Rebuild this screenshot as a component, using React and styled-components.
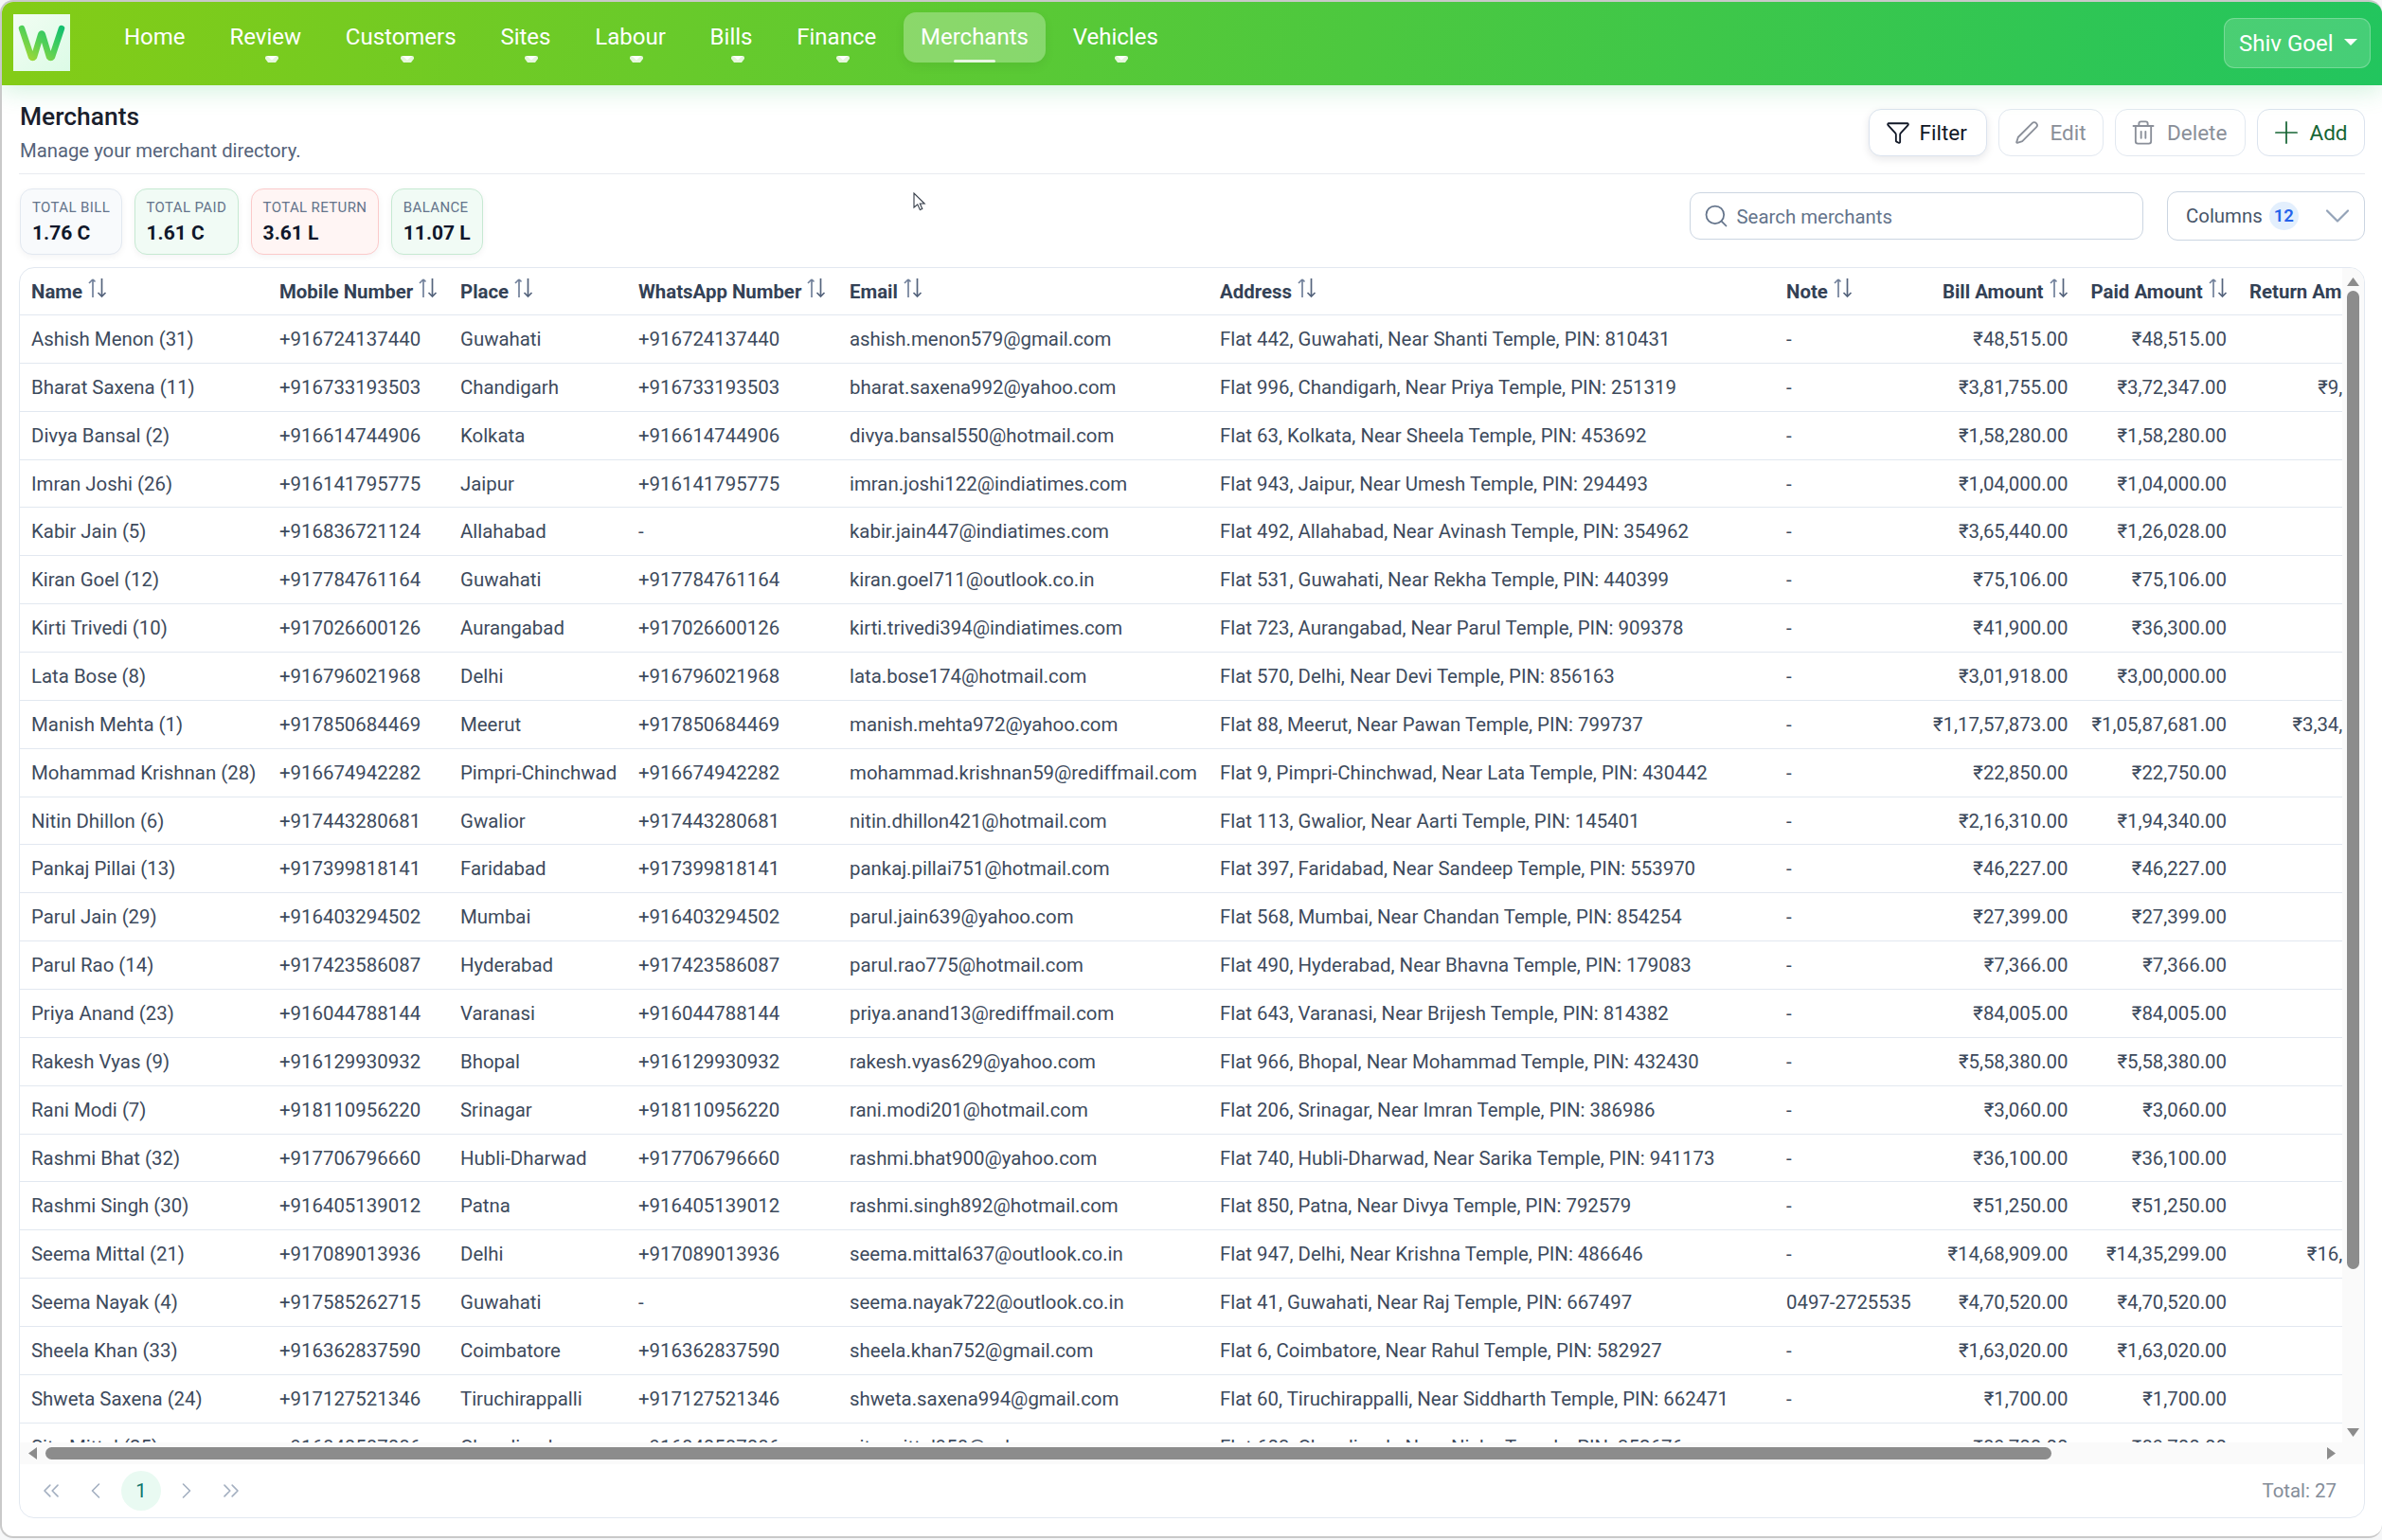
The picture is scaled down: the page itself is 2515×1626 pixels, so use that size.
import React from "react";
import styled, { createGlobalStyle } from "styled-components";
import { Search, Filter, Pen, Trash2, Plus, ChevronDown, ChevronsLeft, ChevronLeft, ChevronRight, ChevronsRight } from "lucide-react";

const GlobalStyle = createGlobalStyle`
  html, body { margin: 0; padding: 0; background: #f6f7f8; }
  body { font-family: Roboto, "Liberation Sans", sans-serif; color: #334155; }
  * { box-sizing: border-box; }
`;

const Page = styled.div`
  position: relative;
  width: 2515px;
  height: 1626px;
  padding-bottom: 2px;
`;
const Window = styled.div`
  height: 1624px;
  background: #fff;
  border: solid #c9c9c9;
  border-width: 2px 0 2px 2px;
  border-radius: 14px;
  overflow: hidden;
  display: flex;
  flex-direction: column;
`;
const Navbar = styled.header`
  flex: none;
  height: 88px;
  padding: 11px 12px 0 12px;
  display: flex;
  align-items: flex-start;
  background: linear-gradient(100deg, #84cc16 0%, #22c55e 100%);
  box-shadow: 0 6px 24px rgba(34, 197, 94, 0.2);
  position: relative;
  z-index: 2;
`;
const LogoBox = styled.svg`
  width: 60px;
  height: 60px;
  margin: 2px 39px 0 0;
  flex: none;
`;
const NavList = styled.nav`
  display: flex;
  gap: 10.8px;
  flex: 1;
`;
const NavItem = styled.a`
  position: relative;
  height: 53px;
  padding: 0 18px;
  display: flex;
  align-items: center;
  padding-bottom: 2px;
  font-size: 24px;
  color: #fff;
  border-radius: 13px;
  background: ${(p) => (p.$active ? "rgba(255,255,255,0.28)" : "transparent")};
  box-shadow: ${(p) => (p.$active ? "0 4px 12px rgba(0,0,0,0.06)" : "none")};
`;
const Caret = styled.svg`
  position: absolute;
  bottom: 0;
  left: calc(50% + 6.5px);
  transform: translateX(-50%);
  width: 14px;
  height: 7px;
`;
const ActiveBar = styled.span`
  position: absolute;
  left: 50%;
  bottom: 0;
  width: 44px;
  height: 3px;
  margin-left: -22px;
  background: rgba(255, 255, 255, 0.8);
  border-radius: 2px;
`;
const UserButton = styled.button`
  flex: none;
  margin-top: 6px;
  width: 155px;
  height: 53px;
  padding: 0 13px 0 15px;
  display: flex;
  align-items: center;
  justify-content: space-between;
  font: 400 24px Roboto, sans-serif;
  color: #fff;
  background: rgba(255, 255, 255, 0.16);
  border: 1.5px solid rgba(255, 255, 255, 0.25);
  border-radius: 11px;
`;
const UserCaret = styled.span`
  width: 0;
  height: 0;
  border-left: 7px solid transparent;
  border-right: 7px solid transparent;
  border-top: 7px solid #fff;
  margin-top: -2px;
`;
const Main = styled.main`
  flex: 1;
  min-height: 0;
  padding: 0 18px 0 18px;
  display: flex;
  flex-direction: column;
`;
const Header = styled.div`
  flex: none;
  height: 94px;
  padding: 17px 0 0 1px;
  display: flex;
  justify-content: space-between;
  align-items: flex-start;
  border-bottom: 1.5px solid #e8ebf0;
`;
const Title = styled.h1`
  margin: 0;
  font-size: 26.4px;
  line-height: 32px;
  font-weight: 500;
  color: #1a202c;
`;
const Subtitle = styled.p`
  margin: 5px 0 0;
  font-size: 20.3px;
  line-height: 30px;
  color: #55637a;
`;
const Actions = styled.div`
  display: flex;
  gap: 12px;
  margin-top: 8px;
`;
const ActionButton = styled.button`
  width: ${(p) => p.$w}px;
  height: 50px;
  padding: 0 0 0 ${(p) => p.$pl}px;
  display: flex;
  align-items: center;
  gap: ${(p) => p.$gap}px;
  font: 400 22.5px Roboto, sans-serif;
  color: ${(p) => p.$color};
  background: #fff;
  border: 1.5px solid ${(p) => p.$border || "#e2e8f0"};
  border-radius: 13px;
  box-shadow: ${(p) => (p.$raised ? "0 3px 9px rgba(15,23,42,0.1)" : "none")};
`;
const Toolbar = styled.div`
  flex: none;
  height: 98px;
  padding: 15px 0 0 1px;
  display: flex;
  justify-content: space-between;
  align-items: flex-start;
`;
const Stats = styled.div`
  display: flex;
  gap: 12.4px;
`;
const StatCard = styled.div`
  height: 70px;
  padding: 10px 12px 0;
  background: ${(p) => p.$bg};
  border: 1.5px solid ${(p) => p.$border};
  border-radius: 13px;
  box-shadow: 0 2px 7px rgba(15, 23, 42, 0.05);
`;
const StatLabel = styled.div`
  font-size: 15px;
  line-height: 19px;
  letter-spacing: 0.37px;
  color: #64748b;
  text-transform: uppercase;
  white-space: nowrap;
`;
const StatValue = styled.div`
  margin-top: 3px;
  font-size: 21px;
  line-height: 28px;
  font-weight: 700;
  color: #0f172a;
  white-space: nowrap;
`;
const Controls = styled.div`
  display: flex;
  align-items: center;
  gap: 25px;
  margin-top: 3px;
`;
const SearchBox = styled.label`
  width: 479px;
  height: 50px;
  padding: 0 0 0 13px;
  display: flex;
  align-items: center;
  gap: 7.5px;
  font-size: 20.4px;
  color: #64748b;
  border: 1.5px solid #cbd5e1;
  border-radius: 11px;
`;
const SearchText = styled.span`
  padding-top: 2px;
`;
const ColumnsButton = styled.button`
  width: 209px;
  height: 52px;
  padding: 0 6px 0 19px;
  display: flex;
  align-items: center;
  font: 400 20.4px Roboto, sans-serif;
  color: #475569;
  background: #fff;
  border: 1.5px solid #cbd5e1;
  border-radius: 11px;
`;
const CountBadge = styled.span`
  width: 31px;
  height: 30px;
  margin-left: 7px;
  margin-right: auto;
  display: flex;
  align-items: center;
  justify-content: center;
  font-size: 18.5px;
  font-weight: 600;
  color: #2563eb;
  background: #e3effd;
  border-radius: 15px;
`;
const TableFrame = styled.section`
  flex: none;
  height: 1321px;
  border: 1.5px solid #e2e8f0;
  border-radius: 16px;
  overflow: hidden;
  display: flex;
  flex-direction: column;
  background: #fff;
`;
const ScrollArea = styled.div`
  flex: 1;
  min-height: 0;
  display: grid;
  grid-template-columns: 1fr 23px;
  grid-template-rows: 1fr 23px;
`;
const Viewport = styled.div`
  overflow: hidden;
  min-width: 0;
  min-height: 0;
`;
const Table = styled.table`
  width: 2530px;
  table-layout: fixed;
  border-collapse: separate;
  border-spacing: 0;
  font-size: 20.4px;
`;
const HeadCell = styled.th`
  height: 50px;
  padding: 0 12px;
  font-size: 20.4px;
  font-weight: 700;
  color: #334155;
  text-align: ${(p) => (p.$right ? "right" : "left")};
  border-bottom: 1.5px solid #e2e8f0;
  white-space: nowrap;
`;
const HeadInner = styled.span`
  display: inline-flex;
  align-items: center;
  gap: 5px;
`;
const SortGlyph = styled.svg`
  width: 21px;
  height: 22px;
  margin-bottom: 7px;
  flex: none;
`;
const BodyCell = styled.td`
  height: 50.86px;
  padding: 0 ${(p) => p.$pr || 12}px 0 12px;
  color: #3d4a5c;
  font-weight: 400;
  text-align: ${(p) => (p.$right ? "right" : "left")};
  border-bottom: 1.5px solid #e2e8f0;
  white-space: nowrap;
  overflow: hidden;
`;
const VBar = styled.div`
  background: #fafafa;
  display: flex;
  flex-direction: column;
  align-items: center;
  padding: 10px 0 6px;
`;
const VThumb = styled.div`
  width: 13px;
  height: 1033px;
  margin-top: 5px;
  background: #8c8c8c;
  border-radius: 7px;
`;
const VArrowEnd = styled.svg`
  width: 13px;
  height: 9px;
  margin-top: auto;
  fill: #8c8c8c;
`;
const HBar = styled.div`
  grid-column: 1 / 3;
  background: #fafafa;
  display: flex;
  align-items: center;
  padding: 0 30px 0 9px;
`;
const HThumb = styled.div`
  width: 2118px;
  height: 13px;
  margin-left: 8.5px;
  background: #8c8c8c;
  border-radius: 7px;
`;
const Arrow = styled.svg`
  width: ${(p) => p.$w}px;
  height: ${(p) => p.$h}px;
  flex: none;
  fill: #8c8c8c;
`;
const HArrowEnd = styled(Arrow)`
  margin-left: auto;
`;
const Pager = styled.div`
  flex: none;
  height: 56px;
  padding: 0 29px 0 11.5px;
  display: flex;
  align-items: center;
  color: #a3afc0;
`;
const PageSlot = styled.span`
  width: 42px;
  height: 42px;
  margin-right: 5.7px;
  display: flex;
  align-items: center;
  justify-content: center;
  border-radius: 50%;
  font-size: 20.4px;
  color: ${(p) => (p.$current ? "#0f766e" : "inherit")};
  background: ${(p) => (p.$current ? "#e9faf2" : "transparent")};
`;
const Total = styled.div`
  margin-left: auto;
  font-size: 20.4px;
  color: #858d99;
`;
const Cursor = styled.svg`
  position: absolute;
  left: 964px;
  top: 203px;
  width: 14px;
  height: 20px;
`;

const navItems = [
  ["Home", false],
  ["Review", true],
  ["Customers", true],
  ["Sites", true],
  ["Labour", true],
  ["Bills", true],
  ["Finance", true],
  ["Merchants", false, true],
  ["Vehicles", true],
];

const stats = [
  ["Total Bill", "1.76 C", "#f8fafc", "#e2e8f0"],
  ["Total Paid", "1.61 C", "#f1fbf5", "#c6e9d2"],
  ["Total Return", "3.61 L", "#fff5f4", "#fbcaca"],
  ["Balance", "11.07 L", "#f1fbf5", "#c6e9d2"],
];

const columns = [
  ["Name", 262],
  ["Mobile Number", 191],
  ["Place", 188],
  ["WhatsApp Number", 223],
  ["Email", 391],
  ["Address", 598],
  ["Note", 153.5],
  ["Bill Amount", 168, true],
  ["Paid Amount", 167.5, true],
  ["Return Amount", 188, true],
];

const rows = [
  ["Ashish Menon (31)", "+916724137440", "Guwahati", 1, "ashish.menon579@gmail.com", "Flat 442, Guwahati, Near Shanti Temple, PIN: 810431", "-", "₹48,515.00", "₹48,515.00", ""],
  ["Bharat Saxena (11)", "+916733193503", "Chandigarh", 1, "bharat.saxena992@yahoo.com", "Flat 996, Chandigarh, Near Priya Temple, PIN: 251319", "-", "₹3,81,755.00", "₹3,72,347.00", "₹9,408.00"],
  ["Divya Bansal (2)", "+916614744906", "Kolkata", 1, "divya.bansal550@hotmail.com", "Flat 63, Kolkata, Near Sheela Temple, PIN: 453692", "-", "₹1,58,280.00", "₹1,58,280.00", ""],
  ["Imran Joshi (26)", "+916141795775", "Jaipur", 1, "imran.joshi122@indiatimes.com", "Flat 943, Jaipur, Near Umesh Temple, PIN: 294493", "-", "₹1,04,000.00", "₹1,04,000.00", ""],
  ["Kabir Jain (5)", "+916836721124", "Allahabad", 0, "kabir.jain447@indiatimes.com", "Flat 492, Allahabad, Near Avinash Temple, PIN: 354962", "-", "₹3,65,440.00", "₹1,26,028.00", ""],
  ["Kiran Goel (12)", "+917784761164", "Guwahati", 1, "kiran.goel711@outlook.co.in", "Flat 531, Guwahati, Near Rekha Temple, PIN: 440399", "-", "₹75,106.00", "₹75,106.00", ""],
  ["Kirti Trivedi (10)", "+917026600126", "Aurangabad", 1, "kirti.trivedi394@indiatimes.com", "Flat 723, Aurangabad, Near Parul Temple, PIN: 909378", "-", "₹41,900.00", "₹36,300.00", ""],
  ["Lata Bose (8)", "+916796021968", "Delhi", 1, "lata.bose174@hotmail.com", "Flat 570, Delhi, Near Devi Temple, PIN: 856163", "-", "₹3,01,918.00", "₹3,00,000.00", ""],
  ["Manish Mehta (1)", "+917850684469", "Meerut", 1, "manish.mehta972@yahoo.com", "Flat 88, Meerut, Near Pawan Temple, PIN: 799737", "-", "₹1,17,57,873.00", "₹1,05,87,681.00", "₹3,34,000.00"],
  ["Mohammad Krishnan (28)", "+916674942282", "Pimpri-Chinchwad", 1, "mohammad.krishnan59@rediffmail.com", "Flat 9, Pimpri-Chinchwad, Near Lata Temple, PIN: 430442", "-", "₹22,850.00", "₹22,750.00", ""],
  ["Nitin Dhillon (6)", "+917443280681", "Gwalior", 1, "nitin.dhillon421@hotmail.com", "Flat 113, Gwalior, Near Aarti Temple, PIN: 145401", "-", "₹2,16,310.00", "₹1,94,340.00", ""],
  ["Pankaj Pillai (13)", "+917399818141", "Faridabad", 1, "pankaj.pillai751@hotmail.com", "Flat 397, Faridabad, Near Sandeep Temple, PIN: 553970", "-", "₹46,227.00", "₹46,227.00", ""],
  ["Parul Jain (29)", "+916403294502", "Mumbai", 1, "parul.jain639@yahoo.com", "Flat 568, Mumbai, Near Chandan Temple, PIN: 854254", "-", "₹27,399.00", "₹27,399.00", ""],
  ["Parul Rao (14)", "+917423586087", "Hyderabad", 1, "parul.rao775@hotmail.com", "Flat 490, Hyderabad, Near Bhavna Temple, PIN: 179083", "-", "₹7,366.00", "₹7,366.00", ""],
  ["Priya Anand (23)", "+916044788144", "Varanasi", 1, "priya.anand13@rediffmail.com", "Flat 643, Varanasi, Near Brijesh Temple, PIN: 814382", "-", "₹84,005.00", "₹84,005.00", ""],
  ["Rakesh Vyas (9)", "+916129930932", "Bhopal", 1, "rakesh.vyas629@yahoo.com", "Flat 966, Bhopal, Near Mohammad Temple, PIN: 432430", "-", "₹5,58,380.00", "₹5,58,380.00", ""],
  ["Rani Modi (7)", "+918110956220", "Srinagar", 1, "rani.modi201@hotmail.com", "Flat 206, Srinagar, Near Imran Temple, PIN: 386986", "-", "₹3,060.00", "₹3,060.00", ""],
  ["Rashmi Bhat (32)", "+917706796660", "Hubli-Dharwad", 1, "rashmi.bhat900@yahoo.com", "Flat 740, Hubli-Dharwad, Near Sarika Temple, PIN: 941173", "-", "₹36,100.00", "₹36,100.00", ""],
  ["Rashmi Singh (30)", "+916405139012", "Patna", 1, "rashmi.singh892@hotmail.com", "Flat 850, Patna, Near Divya Temple, PIN: 792579", "-", "₹51,250.00", "₹51,250.00", ""],
  ["Seema Mittal (21)", "+917089013936", "Delhi", 1, "seema.mittal637@outlook.co.in", "Flat 947, Delhi, Near Krishna Temple, PIN: 486646", "-", "₹14,68,909.00", "₹14,35,299.00", "₹16,000.00"],
  ["Seema Nayak (4)", "+917585262715", "Guwahati", 0, "seema.nayak722@outlook.co.in", "Flat 41, Guwahati, Near Raj Temple, PIN: 667497", "0497-2725535", "₹4,70,520.00", "₹4,70,520.00", ""],
  ["Sheela Khan (33)", "+916362837590", "Coimbatore", 1, "sheela.khan752@gmail.com", "Flat 6, Coimbatore, Near Rahul Temple, PIN: 582927", "-", "₹1,63,020.00", "₹1,63,020.00", ""],
  ["Shweta Saxena (24)", "+917127521346", "Tiruchirappalli", 1, "shweta.saxena994@gmail.com", "Flat 60, Tiruchirappalli, Near Siddharth Temple, PIN: 662471", "-", "₹1,700.00", "₹1,700.00", ""],
  ["Sita Mittal (25)", "+916840587086", "Chandigarh", 1, "sita.mittal958@yahoo.com", "Flat 603, Chandigarh, Near Nisha Temple, PIN: 352676", "-", "₹89,700.00", "₹89,700.00", ""],
];

function Logo() {
  return (
    <LogoBox viewBox="0 0 60 60" aria-label="W logo">
      <defs>
        <linearGradient id="logoBg" x1="0" y1="0" x2="1" y2="1">
          <stop offset="0" stopColor="#f2fdf3" />
          <stop offset="1" stopColor="#dcfbe6" />
        </linearGradient>
        <linearGradient id="logoW" x1="0" y1="1" x2="1" y2="0">
          <stop offset="0" stopColor="#a8d932" />
          <stop offset="0.55" stopColor="#4ccf5a" />
          <stop offset="1" stopColor="#14c06e" />
        </linearGradient>
      </defs>
      <rect width="60" height="60" fill="url(#logoBg)" />
      <path d="M9 15 L19 45 Q20.5 47 22 45 L29 22 Q30 19 31 22 L38 45 Q39.5 47 41 45 L51 15" fill="none" stroke="url(#logoW)" strokeWidth="6.5" strokeLinecap="round" strokeLinejoin="round" />
    </LogoBox>
  );
}

function SortIcon() {
  return (
    <SortGlyph viewBox="0 0 21 22" fill="none" strokeWidth="1.7">
      <path d="M6 21V2M6 2L2 6M6 2L8.5 4.5" stroke="#71809a" />
      <path d="M15.5 1V20M11.5 16L15.5 20L19.5 16" stroke="#55647d" />
    </SortGlyph>
  );
}

export default function App() {
  return (
    <Page>
      <GlobalStyle />
      <Window>
        <Navbar>
          <Logo />
          <NavList>
            {navItems.map(([label, caret, active]) => (
              <NavItem key={label} $active={active}>
                {label}
                {caret && (
                  <Caret viewBox="0 0 14 7">
                    <path d="M2 0H12Q14 0 14 2V3L11 7H3L0 3V2Q0 0 2 0Z" fill="#e6f7dc" />
                    <path d="M2 0H12L7 4.5Z" fill="#fff" />
                  </Caret>
                )}
                {active && <ActiveBar />}
              </NavItem>
            ))}
          </NavList>
          <UserButton>
            Shiv Goel
            <UserCaret />
          </UserButton>
        </Navbar>
        <Main>
          <Header>
            <div>
              <Title>Merchants</Title>
              <Subtitle>Manage your merchant directory.</Subtitle>
            </div>
            <Actions>
              <ActionButton $w={125} $pl={16.5} $gap={10} $color="#111827" $raised $border="#dbe3ee">
                <Filter size={26} strokeWidth={1.7} />
                Filter
              </ActionButton>
              <ActionButton $w={111} $pl={15.5} $gap={12} $color="#8a8f99">
                <Pen size={26} strokeWidth={1.7} />
                Edit
              </ActionButton>
              <ActionButton $w={138} $pl={15} $gap={11} $color="#8a8f99">
                <Trash2 size={28} strokeWidth={1.6} />
                Delete
              </ActionButton>
              <ActionButton $w={114} $pl={10.5} $gap={6} $color="#166534" $border="#dbe3ee">
                <Plus size={38} strokeWidth={1.1} />
                Add
              </ActionButton>
            </Actions>
          </Header>
          <Toolbar>
            <Stats>
              {stats.map(([label, value, bg, border]) => (
                <StatCard key={label} $bg={bg} $border={border}>
                  <StatLabel>{label}</StatLabel>
                  <StatValue>{value}</StatValue>
                </StatCard>
              ))}
            </Stats>
            <Controls>
              <SearchBox>
                <Search size={28} strokeWidth={1.5} color="#64748b" />
                <SearchText>Search merchants</SearchText>
              </SearchBox>
              <ColumnsButton>
                Columns
                <CountBadge>12</CountBadge>
                <ChevronDown size={44} strokeWidth={1.2} color="#94a3b8" />
              </ColumnsButton>
            </Controls>
          </Toolbar>
          <TableFrame>
            <ScrollArea>
              <Viewport>
                <Table>
                  <colgroup>
                    {columns.map(([name, width]) => (
                      <col key={name} width={width} />
                    ))}
                  </colgroup>
                  <thead>
                    <tr>
                      {columns.map(([name, , right]) => (
                        <HeadCell key={name} $right={right}>
                          <HeadInner>
                            {name}
                            <SortIcon />
                          </HeadInner>
                        </HeadCell>
                      ))}
                    </tr>
                  </thead>
                  <tbody>
                    {rows.map((r) => (
                      <tr key={r[0]}>
                        <BodyCell>{r[0]}</BodyCell>
                        <BodyCell>{r[1]}</BodyCell>
                        <BodyCell>{r[2]}</BodyCell>
                        <BodyCell>{r[3] ? r[1] : "-"}</BodyCell>
                        <BodyCell>{r[4]}</BodyCell>
                        <BodyCell>{r[5]}</BodyCell>
                        <BodyCell>{r[6]}</BodyCell>
                        <BodyCell $right>{r[7]}</BodyCell>
                        <BodyCell $right>{r[8]}</BodyCell>
                        <BodyCell $right $pr={15}>{r[9]}</BodyCell>
                      </tr>
                    ))}
                  </tbody>
                </Table>
              </Viewport>
              <VBar>
                <Arrow $w={13} $h={9} viewBox="0 0 13 9">
                  <path d="M6.5 0L13 9H0Z" />
                </Arrow>
                <VThumb />
                <VArrowEnd viewBox="0 0 13 9">
                  <path d="M6.5 9L13 0H0Z" />
                </VArrowEnd>
              </VBar>
              <HBar>
                <Arrow $w={9} $h={13} viewBox="0 0 9 13">
                  <path d="M0 6.5L9 0V13Z" />
                </Arrow>
                <HThumb />
                <HArrowEnd $w={9} $h={13} viewBox="0 0 9 13">
                  <path d="M9 6.5L0 0V13Z" />
                </HArrowEnd>
              </HBar>
            </ScrollArea>
            <Pager>
              <PageSlot><ChevronsLeft size={28} strokeWidth={1.4} /></PageSlot>
              <PageSlot><ChevronLeft size={28} strokeWidth={1.4} /></PageSlot>
              <PageSlot $current>1</PageSlot>
              <PageSlot><ChevronRight size={28} strokeWidth={1.4} /></PageSlot>
              <PageSlot><ChevronsRight size={28} strokeWidth={1.4} /></PageSlot>
              <Total>Total: 27</Total>
            </Pager>
          </TableFrame>
        </Main>
      </Window>
      <Cursor viewBox="0 0 14 20">
        <path d="M1 1V16L4.8 12.8L7.4 18.6L9.8 17.5L7.3 12H12.2Z" fill="#fff" stroke="#333b47" strokeWidth="1.1" />
      </Cursor>
    </Page>
  );
}
